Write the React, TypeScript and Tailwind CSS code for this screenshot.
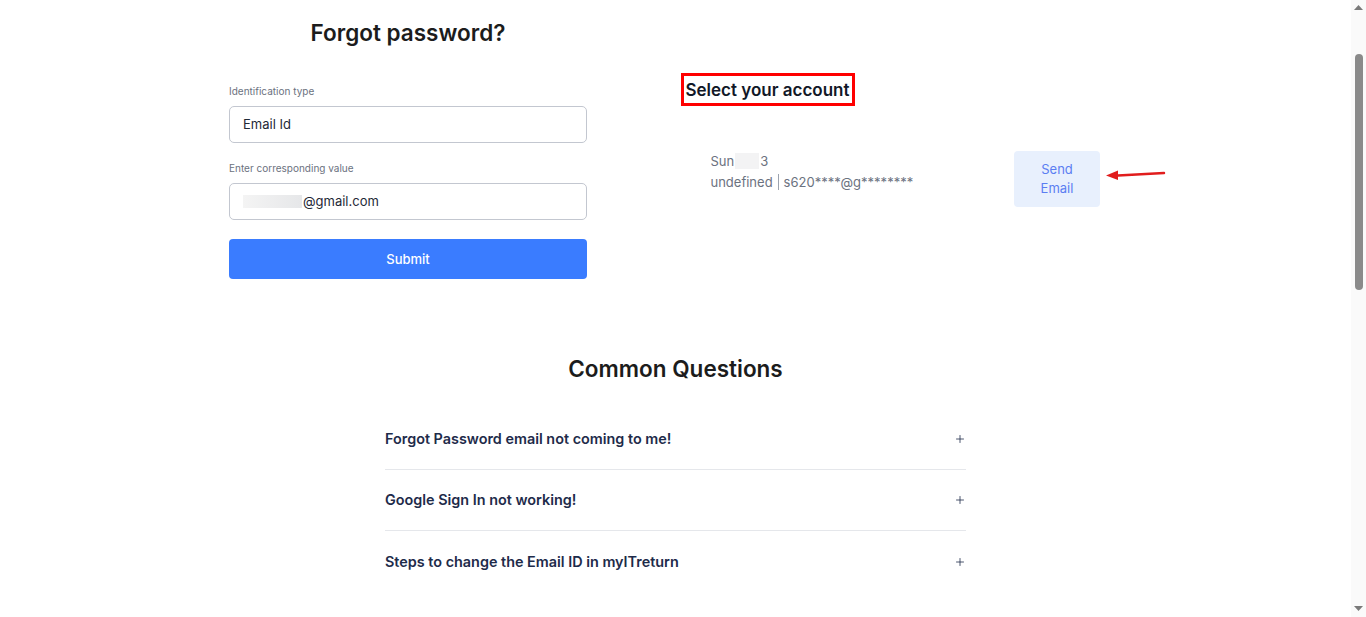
import {Plus} from "lucide-react"

const questions = [
  "Forgot Password email not coming to me!",
  "Google Sign In not working!",
  "Steps to change the Email ID in myITreturn"
]

function Field({label, children}: {label: string; children: React.ReactNode}) {
  return (
    <div>
      <label className="block text-[10px] leading-[14px] text-[#6b7280]">{label}</label>
      <div className="mt-[8px] flex h-[37px] items-center rounded-[5px] border border-[#c3c7d0] px-[13px] text-[13px] text-[#1f2937]">
        {children}
      </div>
    </div>
  )
}

// window scrollbar, page is scrolled a little way down
function Scrollbar() {
  return (
    <div className="fixed right-0 top-0 flex h-screen w-[15px] flex-col items-center bg-[#fafafa]">
      <svg className="mt-[5px]" width="9" height="5" viewBox="0 0 9 5">
        <path d="M0 5 L4.5 0 L9 5 Z" fill="#7a7a7a"/>
      </svg>
      <div className="mt-[44px] h-[236px] w-[8px] rounded-full bg-[#8a8a8a]"/>
      <div className="flex-1"/>
      <svg className="mb-[6px]" width="9" height="5" viewBox="0 0 9 5">
        <path d="M0 0 L9 0 L4.5 5 Z" fill="#7a7a7a"/>
      </svg>
    </div>
  )
}

export default function App() {
  return (
    <div className="min-h-screen bg-white font-['Inter','Liberation_Sans',sans-serif]">
      <main className="mr-[15px] pb-[40px]">
        <div className="mx-auto grid w-[893px] grid-cols-2">
          {/* reset form */}
          <section className="w-[358px]">
            <h1 className="mt-[19px] text-center text-[22.5px] font-semibold leading-7 text-[#1c1c1c]">
              Forgot password?
            </h1>
            <div className="mt-[37px] flex flex-col gap-[18px]">
              <Field label="Identification type">Email Id</Field>
              <Field label="Enter corresponding value">
                <span className="mr-px h-[13px] w-[59px] bg-gradient-to-r from-[#f4f4f4] to-[#e6e7e9]"/>
                @gmail.com
              </Field>
            </div>
            <button className="mt-[19px] h-[40px] w-full rounded-[4px] bg-[#3a7cff] pt-px text-[13px] font-medium text-white">
              Submit
            </button>
          </section>

          {/* matching accounts */}
          <section className="pl-[5px]">
            <div className="mt-[73px] inline-block border-[3px] border-[#ff0000] px-[2px] pb-px pt-[2px]">
              <h2 className="text-[17px] font-semibold leading-6 text-[#111827]">Select your account</h2>
            </div>
            <div className="relative mt-[45px] flex items-start justify-between pl-[30px] pr-[22px]">
              <div className="-mt-px text-[13px] leading-[22px] text-[#6b7280]">
                <div className="flex h-[22px] items-center">
                  Sun<span className="mx-px h-[16px] w-[24px] bg-[#f3f3f4]"/>3
                </div>
                <div className="-mt-px flex h-[22px] items-center">
                  undefined
                  <span className="mx-[5px] h-[16px] border-l border-[#9ca3af]"/>
                  s620****@g********
                </div>
              </div>
              <button className="flex h-[56px] w-[86px] flex-col items-center justify-center rounded-[4px] bg-[#e8f0fd] text-[13px] leading-[19px] text-[#5b7ef2]">
                <span>Send</span>
                <span>Email</span>
              </button>
              {/* pointer arrow */}
              <svg className="absolute left-[423px] top-[18px]" width="62" height="12" viewBox="0 0 62 12">
                <path d="M60 4 L14 6.5" stroke="#e11d1d" strokeWidth="2.5" strokeLinecap="round"/>
                <path d="M2 6.5 L14 1.5 L14 11 Z" fill="#e11d1d"/>
              </svg>
            </div>
          </section>
        </div>

        {/* FAQ */}
        <section className="mx-auto mt-[76px] w-[581px]">
          <h2 className="text-center text-[22.5px] font-semibold leading-7 text-[#1c1c1c]">Common Questions</h2>
          <div className="mt-[26px]">
            {questions.map((q, i) => (
              <div
                key={q}
                className={`flex h-[61px] items-center justify-between ${i < questions.length - 1 ? "border-b border-[#e5e7eb]" : ""}`}
              >
                <span className="text-[14.4px] font-semibold text-[#1e2b4a]">{q}</span>
                <Plus className="h-[12px] w-[12px] text-[#1e2b4a]" strokeWidth={1.6}/>
              </div>
            ))}
          </div>
        </section>
        <div className="h-[900px]"/>
      </main>
      <Scrollbar/>
    </div>
  )
}
